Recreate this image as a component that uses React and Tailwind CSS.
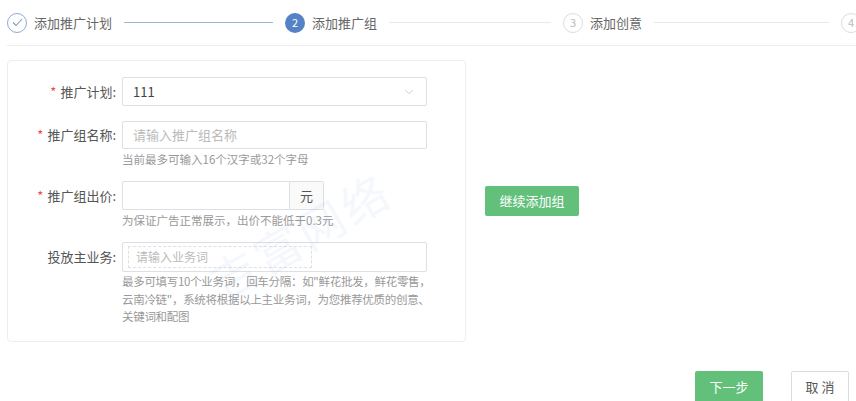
import { ChevronDown } from "lucide-react";

// stepper item
function Step({ state, num, label, last }) {
    return (
        <div className={`flex items-center shrink-0 ${last ? 'w-[40px]' : 'w-[278px]'}`}>
            {state === 'done' && (
                <div className="w-[20px] h-[20px] rounded-full border border-[#8fa9d6] flex items-center justify-center shrink-0">
                    <svg width="11" height="9" viewBox="0 0 11 9" fill="none">
                        <polyline points="1,4.5 4,7.5 10,1" stroke="#7d9bd0" strokeWidth="1.1" />
                    </svg>
                </div>
            )}
            {state === 'active' && (
                <div className="w-[20px] h-[20px] rounded-full bg-[#5582c4] text-white text-[11px] flex items-center justify-center shrink-0">{num}</div>
            )}
            {state === 'todo' && (
                <div className="w-[20px] h-[20px] rounded-full border border-[#dcdcdc] text-[#bbb] text-[11px] flex items-center justify-center shrink-0">{num}</div>
            )}
            {label && <span className="ml-[7px] text-[13px] text-[#666] whitespace-nowrap">{label}</span>}
            {!last && <div className={`flex-1 h-px mx-3 ${state === 'done' ? 'bg-[#9fb3dc]' : 'bg-[#e9e9e9]'}`}></div>}
        </div>
    )
}

export default function App() {
    return (
        <div className="w-[856px] h-[401px] overflow-hidden bg-white relative" style={{ fontFamily: '"Noto Sans CJK SC", "Liberation Sans", sans-serif' }}>

            {/* steps */}
            <div className="ml-[7px] h-[46px] flex items-center overflow-hidden border-b border-[#ececec]">
                <Step state="done" label="添加推广计划" />
                <Step state="active" num="2" label="添加推广组" />
                <Step state="todo" num="3" label="添加创意" />
                <Step state="todo" num="4" last />
            </div>

            {/* form + add group */}
            <div className="flex items-center gap-[19px] pl-[7px] mt-[14px]">
                <div className="w-[459px] border border-[#eeeeee] rounded-[4px] pt-[16px] pb-[15px] text-[13px]">

                    {/* plan */}
                    <div className="flex items-center mb-[15px]">
                        <label className="w-[114px] text-right text-[#555] pr-[6px]"><span className="text-[#f04a4a] mr-1">*</span>推广计划:</label>
                        <div className="w-[305px] h-[29px] border border-[#dcdfe6] rounded-[2px] flex items-center justify-between px-[10px]">
                            <span className="text-[#444] text-[13px]">111</span>
                            <ChevronDown size={14} strokeWidth={1.2} className="text-[#bbb]" />
                        </div>
                    </div>

                    {/* name */}
                    <div className="flex mb-[13px]">
                        <label className="w-[114px] h-[28px] flex items-center justify-end text-[#555] pr-[6px]"><span className="text-[#f04a4a] mr-1">*</span>推广组名称:</label>
                        <div className="flex flex-col">
                            <div className="w-[305px] h-[28px] border border-[#dcdfe6] rounded-[2px] flex items-center px-[10px] text-[#bbb]">请输入推广组名称</div>
                            <p className="mt-px text-[11.5px] leading-[18px] text-[#999]">当前最多可输入16个汉字或32个字母</p>
                        </div>
                    </div>

                    {/* price */}
                    <div className="flex mb-[13px]">
                        <label className="w-[114px] h-[29px] flex items-center justify-end text-[#555] pr-[6px]"><span className="text-[#f04a4a] mr-1">*</span>推广组出价:</label>
                        <div className="flex flex-col">
                            <div className="flex h-[29px]">
                                <div className="w-[168px] border border-[#dcdfe6] rounded-l-[2px]"></div>
                                <div className="w-[34px] border border-l-0 border-[#dcdfe6] bg-[#fafafa] rounded-r-[2px] flex items-center justify-center text-[#555]">元</div>
                            </div>
                            <p className="mt-px text-[11.5px] leading-[18px] text-[#999]">为保证广告正常展示，出价不能低于0.3元</p>
                        </div>
                    </div>

                    {/* business */}
                    <div className="flex">
                        <label className="w-[114px] h-[30px] flex items-center justify-end text-[#555] pr-[6px]">投放主业务:</label>
                        <div className="flex flex-col">
                            <div className="w-[305px] h-[30px] border border-[#dcdfe6] rounded-[2px] flex items-center pl-[5px]">
                                <div className="w-[184px] h-[22px] border border-dashed border-[#e0e0e0] flex items-center px-[7px] text-[12px] text-[#bbb]">请输入业务词</div>
                            </div>
                            <p className="mt-px text-[11.5px] leading-[17.5px] text-[#999] whitespace-nowrap tracking-[-0.3px]">
                                最多可填写10个业务词，回车分隔：如"鲜花批发，鲜花零售，<br />
                                云南冷链"，系统将根据以上主业务词，为您推荐优质的创意、<br />
                                关键词和配图
                            </p>
                        </div>
                    </div>
                </div>

                <button className="w-[94px] h-[30px] bg-[#62c07a] rounded-[2px] text-white text-[13px]">继续添加组</button>
            </div>

            {/* footer */}
            <div className="flex justify-end items-start gap-[28px] pr-[7px] mt-[29px]">
                <button className="w-[68px] h-[32px] bg-[#62c07a] rounded-[2px] text-white text-[13px]">下一步</button>
                <button className="w-[58px] h-[32px] bg-white border border-[#dcdcdc] rounded-[2px] text-[#555] text-[13px]">取 消</button>
            </div>

            {/* watermark */}
            <div className="absolute left-[200px] top-[200px] -rotate-[30deg] text-[46px] text-[#5b86d6] opacity-[0.06] tracking-[4px] pointer-events-none select-none">吉富网络</div>
        </div>
    )
}
